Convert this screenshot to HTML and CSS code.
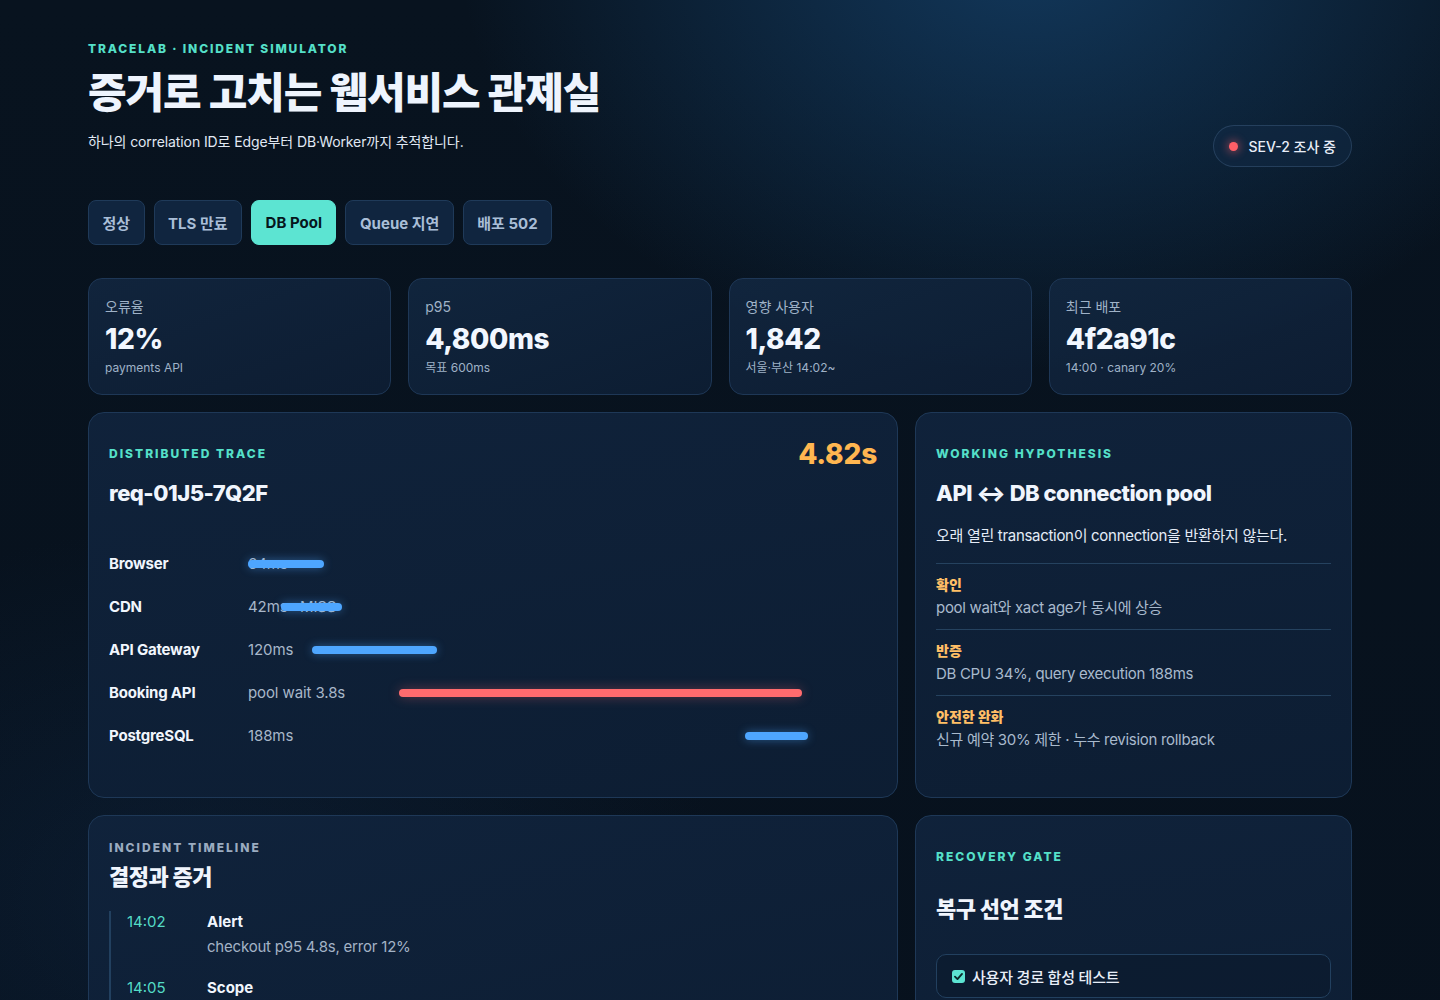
FILE: index.html
```html
<!DOCTYPE html>
<html lang="ko">
<head>
<meta charset="utf-8">
<title>TraceLab · Incident Simulator</title>
<link rel="stylesheet" href="styles.css">
</head>
<body>
<main class="page">
  <header class="top">
    <div class="intro">
      <div class="eyebrow">TRACELAB · INCIDENT SIMULATOR</div>
      <h1 class="title">증거로 고치는 웹서비스 관제실</h1>
      <p class="subtitle">하나의 correlation ID로 Edge부터 DB·Worker까지 추적합니다.</p>
    </div>
    <div class="sev"><span class="sev-dot"></span>SEV-2 조사 중</div>
  </header>

  <nav class="tabs">
    <button class="tab">정상</button>
    <button class="tab">TLS 만료</button>
    <button class="tab active">DB Pool</button>
    <button class="tab">Queue 지연</button>
    <button class="tab">배포 502</button>
  </nav>

  <section class="metrics">
    <div class="card">
      <div class="card-label">오류율</div>
      <div class="card-value">12%</div>
      <div class="card-sub">payments API</div>
    </div>
    <div class="card">
      <div class="card-label">p95</div>
      <div class="card-value">4,800ms</div>
      <div class="card-sub">목표 600ms</div>
    </div>
    <div class="card">
      <div class="card-label">영향 사용자</div>
      <div class="card-value">1,842</div>
      <div class="card-sub">서울·부산 14:02~</div>
    </div>
    <div class="card">
      <div class="card-label">최근 배포</div>
      <div class="card-value">4f2a91c</div>
      <div class="card-sub">14:00 · canary 20%</div>
    </div>
  </section>

  <section class="grid">
    <div class="panel trace">
      <div class="panel-head">
        <div class="eyebrow small">DISTRIBUTED TRACE</div>
        <div class="total">4.82s</div>
      </div>
      <h2 class="panel-title">req-01J5-7Q2F</h2>
      <div class="spans">
        <div class="span-row">
          <div class="span-name">Browser</div>
          <div class="span-track"><span class="span-val">64ms</span><span class="bar" style="left:0%;width:12.1%"></span></div>
        </div>
        <div class="span-row">
          <div class="span-name">CDN</div>
          <div class="span-track"><span class="span-val">42ms · MISS</span><span class="bar" style="left:5.2%;width:9.8%"></span></div>
        </div>
        <div class="span-row">
          <div class="span-name">API Gateway</div>
          <div class="span-track"><span class="span-val">120ms</span><span class="bar" style="left:10.2%;width:19.8%"></span></div>
        </div>
        <div class="span-row">
          <div class="span-name">Booking API</div>
          <div class="span-track"><span class="span-val">pool wait 3.8s</span><span class="bar bad" style="left:24%;width:64.1%"></span></div>
        </div>
        <div class="span-row">
          <div class="span-name">PostgreSQL</div>
          <div class="span-track"><span class="span-val">188ms</span><span class="bar" style="left:79%;width:10%"></span></div>
        </div>
      </div>
    </div>

    <div class="panel hypo">
      <div class="panel-head">
        <div class="eyebrow small">WORKING HYPOTHESIS</div>
      </div>
      <h2 class="panel-title">API ↔ DB connection pool</h2>
      <p class="hypo-desc">오래 열린 transaction이 connection을 반환하지 않는다.</p>
      <div class="evidence">
        <div class="ev-label">확인</div>
        <div class="ev-text">pool wait와 xact age가 동시에 상승</div>
      </div>
      <div class="evidence">
        <div class="ev-label">반증</div>
        <div class="ev-text">DB CPU 34%, query execution 188ms</div>
      </div>
      <div class="evidence">
        <div class="ev-label">안전한 완화</div>
        <div class="ev-text">신규 예약 30% 제한 · 누수 revision rollback</div>
      </div>
    </div>

    <div class="panel timeline-panel">
      <div class="eyebrow small muted">INCIDENT TIMELINE</div>
      <h2 class="panel-title tl-title">결정과 증거</h2>
      <ol class="timeline">
        <li class="tl-item">
          <span class="tl-time">14:02</span>
          <div>
            <div class="tl-head">Alert</div>
            <div class="tl-text">checkout p95 4.8s, error 12%</div>
          </div>
        </li>
        <li class="tl-item">
          <span class="tl-time">14:05</span>
          <div>
            <div class="tl-head">Scope</div>
            <div class="tl-text">payments API만 영향, 서울·부산 사용자</div>
          </div>
        </li>
        <li class="tl-item">
          <span class="tl-time">14:09</span>
          <div>
            <div class="tl-head">Evidence</div>
            <div class="tl-text">pool wait 3.8s, active connection 100%</div>
          </div>
        </li>
      </ol>
    </div>

    <div class="panel gate">
      <div class="eyebrow small">RECOVERY GATE</div>
      <h2 class="panel-title gate-title">복구 선언 조건</h2>
      <div class="gate-list">
        <label class="gate-item"><span class="check"><svg viewBox="0 0 14 14" width="13" height="13"><path d="M3.2 7.2 L5.9 9.8 L10.8 4.2" fill="none" stroke="#0a2a2a" stroke-width="2" stroke-linecap="round" stroke-linejoin="round"/></svg></span>사용자 경로 합성 테스트</label>
        <label class="gate-item"><span class="check off"></span>p95 600ms 이하 15분 유지</label>
      </div>
    </div>
  </section>
</main>
</body>
</html>
```

FILE: styles.css
```css
* { box-sizing: border-box; }

html, body { margin: 0; padding: 0; }

body {
  font-family: "Inter", "Noto Sans CJK KR", "Noto Sans", sans-serif;
  color: #eaf1fb;
  min-height: 100vh;
  background:
    radial-gradient(ellipse 760px 560px at 1030px -50px, rgba(24, 78, 128, 0.62), rgba(24, 78, 128, 0) 75%),
    radial-gradient(ellipse 700px 500px at 200px 900px, rgba(18, 46, 80, 0.35), rgba(18, 46, 80, 0) 75%),
    linear-gradient(180deg, #08131f 0%, #07111d 100%);
  background-color: #07111d;
}

.page {
  padding: 41px 88px 60px;
}

.top {
  display: flex;
  justify-content: space-between;
  align-items: flex-end;
}

.eyebrow {
  font-size: 12px;
  line-height: 16px;
  font-weight: 800;
  letter-spacing: 1.85px;
  color: #55e0c9;
}

.title {
  margin: 11px 0 0;
  font-size: 42px;
  line-height: 50px;
  font-weight: 800;
  letter-spacing: -1.1px;
  color: #eef4fd;
}

.subtitle {
  margin: 14px 0 0;
  padding-bottom: 15px;
  font-size: 14px;
  line-height: 20px;
  letter-spacing: -0.1px;
  color: #e1e9f4;
}

.sev {
  display: flex;
  align-items: center;
  gap: 11px;
  height: 42px;
  padding: 0 15px;
  border-radius: 21px;
  border: 1px solid rgba(120, 160, 205, 0.22);
  background: rgba(18, 42, 70, 0.55);
  font-size: 14px;
  font-weight: 500;
  color: #e8eef8;
}

.sev-dot {
  width: 9px;
  height: 9px;
  border-radius: 50%;
  background: #ff5f67;
  box-shadow: 0 0 8px 2px rgba(255, 95, 103, 0.45);
}

.tabs {
  display: flex;
  gap: 9px;
  margin-top: 33px;
}

.tab {
  height: 45px;
  padding: 0 13.5px;
  border-radius: 8px;
  border: 1px solid #1f3a59;
  background: #10253f;
  color: #a9bed7;
  font-family: inherit;
  font-size: 15px;
  font-weight: 700;
}

.tab.active {
  background: #5ce4d2;
  border-color: #5ce4d2;
  color: #06161c;
}

.metrics {
  display: grid;
  grid-template-columns: repeat(4, 1fr);
  gap: 17px;
  margin-top: 33px;
}

.card {
  height: 117px;
  padding: 18px 16px 0;
  border-radius: 14px;
  border: 1px solid #1e3756;
  background: linear-gradient(160deg, rgba(17, 38, 63, 0.92), rgba(13, 30, 52, 0.92));
}

.card-label {
  font-size: 14px;
  line-height: 20px;
  color: #9fb2c7;
}

.card-value {
  margin-top: 5px;
  font-size: 28px;
  line-height: 34px;
  font-weight: 800;
  color: #f2f7ff;
  letter-spacing: -0.4px;
}

.card-sub {
  margin-top: 4px;
  font-size: 12px;
  line-height: 16px;
  color: #9fb2c7;
}

.grid {
  display: grid;
  grid-template-columns: 810px 1fr;
  gap: 17px;
  margin-top: 17px;
}

.panel {
  border-radius: 16px;
  border: 1px solid #1e3857;
  background: linear-gradient(170deg, rgba(16, 35, 60, 0.95), rgba(13, 30, 52, 0.95));
  padding: 24px 20px 24px;
}

.trace, .hypo { height: 386px; }

.panel-head {
  display: flex;
  justify-content: space-between;
  align-items: center;
  min-height: 34px;
}

.eyebrow.small {
  font-size: 12px;
  letter-spacing: 2px;
}

.eyebrow.muted { color: #9bacc0; }

.total {
  font-size: 28px;
  line-height: 34px;
  font-weight: 800;
  color: #ffb650;
  letter-spacing: -0.2px;
}

.panel-title {
  margin: 8px 0 0;
  font-size: 22px;
  line-height: 28px;
  font-weight: 800;
  color: #f0f5fd;
  letter-spacing: -0.5px;
}

.spans { margin-top: 35px; }

.span-row {
  display: grid;
  grid-template-columns: 139px 1fr;
  align-items: center;
  height: 43px;
}

.span-name {
  font-size: 15px;
  font-weight: 700;
  color: #f1f6fd;
  letter-spacing: -0.2px;
}

.span-track {
  position: relative;
  height: 22px;
  display: flex;
  align-items: center;
}

.span-val {
  font-size: 15px;
  color: #a8b7c9;
  letter-spacing: -0.1px;
}

.bar {
  position: absolute;
  top: 50%;
  height: 8px;
  margin-top: -4px;
  border-radius: 4px;
  background: #4ea6ff;
  box-shadow: 0 0 10px rgba(78, 166, 255, 0.45);
}

.bar.bad {
  background: #ff6b6e;
  box-shadow: 0 0 12px rgba(255, 107, 110, 0.35);
}

.hypo-desc {
  margin: 18px 0 16px;
  font-size: 15px;
  line-height: 22px;
  letter-spacing: -0.3px;
  color: #e4ecf7;
}

.evidence {
  border-top: 1px solid #25425f;
  padding: 11px 0 10px;
}

.ev-label {
  font-size: 14px;
  line-height: 20px;
  font-weight: 800;
  color: #ffbf66;
}

.ev-text {
  margin-top: 2px;
  font-size: 15px;
  line-height: 22px;
  letter-spacing: -0.3px;
  color: #a9bacd;
}

.tl-title { margin-top: 7px; }

.timeline {
  list-style: none;
  margin: 20px 0 0;
  padding: 0 0 0 16px;
  border-left: 2px solid #22405f;
}

.tl-item {
  display: grid;
  grid-template-columns: 80px 1fr;
  margin-bottom: 19px;
}

.tl-time {
  font-size: 15px;
  line-height: 22px;
  color: #54dcc6;
}

.tl-head {
  font-size: 15px;
  line-height: 22px;
  font-weight: 700;
  color: #f1f6fd;
}

.tl-text {
  margin-top: 3px;
  font-size: 15px;
  line-height: 22px;
  letter-spacing: -0.2px;
  color: #a3b3c6;
}

.gate { padding-top: 33px; }

.gate-title { margin-top: 30px; }

.gate-list {
  margin-top: 31px;
  display: flex;
  flex-direction: column;
  gap: 10px;
}

.gate-item {
  display: flex;
  align-items: center;
  gap: 7px;
  height: 44px;
  padding: 0 15px;
  border-radius: 10px;
  border: 1px solid #22405f;
  background: rgba(9, 24, 42, 0.5);
  font-size: 15px;
  font-weight: 500;
  letter-spacing: -0.2px;
  color: #e8eef8;
}

.check {
  display: inline-flex;
  align-items: center;
  justify-content: center;
  width: 13px;
  height: 13px;
  border-radius: 3px;
  background: #5ce4d2;
}

.check.off {
  background: transparent;
  border: 1px solid #5b7592;
}
```
